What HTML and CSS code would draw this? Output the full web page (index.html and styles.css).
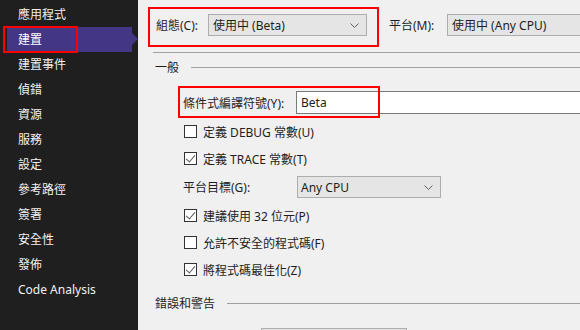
FILE: index.html
```html
<!DOCTYPE html>
<html lang="zh-Hant">
<head>
    <meta charset="UTF-8">
    <title>建置</title>
    <link rel="stylesheet" href="styles.css">
</head>
<body>
<div class="page">
    <ul class="nav">
        <li>應用程式</li>
        <li class="active">建置</li>
        <li>建置事件</li>
        <li>偵錯</li>
        <li>資源</li>
        <li>服務</li>
        <li>設定</li>
        <li>參考路徑</li>
        <li>簽署</li>
        <li>安全性</li>
        <li>發佈</li>
        <li>Code Analysis</li>
    </ul>
    <div class="main">
        <div class="toprow">
            <span class="lbl-config">組態(C):</span>
            <div class="combo combo-config">
                <span>使用中 (Beta)</span>
                <svg class="chev" width="9" height="6" viewBox="0 0 9 6"><path d="M0.5 0.5 L4.5 4.5 L8.5 0.5" fill="none" stroke="#606060" stroke-width="1"/></svg>
            </div>
            <span class="lbl-platform">平台(M):</span>
            <div class="combo combo-platform">
                <span>使用中 (Any CPU)</span>
            </div>
        </div>
        <div class="sep"></div>
        <div class="group">一般</div>
        <div class="field">
            <span class="field-lbl">條件式編譯符號(Y):</span>
            <div class="textbox">Beta</div>
        </div>
        <div class="opts">
            <div class="check"><span class="box"></span>定義 DEBUG 常數(U)</div>
            <div class="check"><span class="box on"></span>定義 TRACE 常數(T)</div>
            <div class="field-row">
                <span class="field-lbl">平台目標(G):</span>
                <div class="combo combo-target">
                    <span>Any CPU</span>
                    <svg class="chev" width="9" height="6" viewBox="0 0 9 6"><path d="M0.5 0.5 L4.5 4.5 L8.5 0.5" fill="none" stroke="#606060" stroke-width="1"/></svg>
                </div>
            </div>
            <div class="check"><span class="box on"></span>建議使用 32 位元(P)</div>
            <div class="check"><span class="box"></span>允許不安全的程式碼(F)</div>
            <div class="check"><span class="box on"></span>將程式碼最佳化(Z)</div>
        </div>
        <div class="group group-errors">錯誤和警告</div>
        <div class="bottombox"></div>
    </div>

    <!-- 標註框 -->
    <div class="mark mark-nav"></div>
    <div class="mark mark-config"></div>
    <div class="mark mark-symbols"></div>
</div>
</body>
</html>
```

FILE: styles.css
```css
body,ul,li{margin:0;padding:0;}
body{
    width:580px;
    height:330px;
    overflow:hidden;
    font-family:"Noto Sans","Noto Sans CJK TC",sans-serif;
    font-size:12px;
    color:#1e1e1e;
}
.page{
    position:relative;
    display:flex;
    width:580px;
    height:330px;
    overflow:hidden;
    background:#f0f0f0;
}

/* 左側選單 */
.nav{
    list-style:none;
    width:138px;
    flex:none;
    padding-top:2px;
    background:#1f1f1f;
}
.nav li{
    position:relative;
    height:25px;
    line-height:25px;
    padding-left:18px;
    color:#f1f1f1;
}
.nav li.active{
    margin-left:7px;
    margin-right:6px;
    padding-left:11px;
    background:#433785;
    color:#fff;
}
.nav li.active::after{
    content:"";
    position:absolute;
    right:-6px;
    top:6px;
    border-left:6px solid #433785;
    border-top:6px solid transparent;
    border-bottom:6px solid transparent;
}

/* 右側內容 */
.main{
    flex:1;
    min-width:0;
    padding-left:15px;
}
.toprow{
    display:flex;
    align-items:center;
    height:22px;
    margin-top:14px;
    white-space:nowrap;
}
.lbl-config{
    width:52px;
    padding-left:3px;
    flex:none;
}
.lbl-platform{
    width:58px;
    padding-left:22px;
    flex:none;
}
.combo{
    display:flex;
    align-items:center;
    justify-content:space-between;
    box-sizing:border-box;
    height:22px;
    padding:0 7px 0 4px;
    background:#e5e5e5;
    border:1px solid #adadad;
    flex:none;
}
.combo-config{width:159px;}
.combo-platform{width:160px;}
.combo-target{width:144px;padding-left:3px;}
.chev{flex:none;margin-top:1px;}

.sep{
    height:1px;
    margin-top:16px;
    background:#a0a0a0;
}
.group{
    display:flex;
    align-items:center;
    gap:12px;
    height:16px;
    margin-top:6px;
    padding-left:2px;
}
.group::after{
    content:"";
    flex:1;
    height:1px;
    background:#a0a0a0;
}
.group-errors{margin-top:12px;}

.field{
    display:flex;
    align-items:center;
    height:23px;
    margin-top:16px;
    padding-left:30px;
}
.field-lbl{
    width:113px;
    flex:none;
}
.textbox{
    flex:none;
    box-sizing:border-box;
    width:300px;
    height:23px;
    line-height:21px;
    padding-left:4px;
    background:#fff;
    border:1px solid #7a7a7a;
}

.opts{
    margin-top:4px;
    padding-left:30px;
}
.check{
    display:flex;
    align-items:center;
    height:27px;
    padding-left:1px;
}
.box{
    box-sizing:border-box;
    width:13px;
    height:13px;
    margin-right:6px;
    background:#fff;
    border:1px solid #333;
    position:relative;
}
.box.on::after{
    content:"";
    position:absolute;
    left:3px;
    top:0;
    width:4px;
    height:8px;
    border-right:1px solid #5a5a5a;
    border-bottom:1px solid #5a5a5a;
    transform:rotate(40deg);
}
.field-row{
    display:flex;
    align-items:center;
    height:30px;
}
.field-row .field-lbl{width:114px;}

.bottombox{
    box-sizing:border-box;
    width:146px;
    height:20px;
    margin-top:17px;
    margin-left:108px;
    background:#e5e5e5;
    border:1px solid #adadad;
}

/* 紅色標註框 */
.mark{
    position:absolute;
    border:2px solid #f00;
    box-sizing:border-box;
}
.mark-nav{left:3px;top:26px;width:75px;height:27px;}
.mark-config{left:148px;top:7px;width:231px;height:40px;}
.mark-symbols{left:178px;top:86px;width:202px;height:32px;}
```
